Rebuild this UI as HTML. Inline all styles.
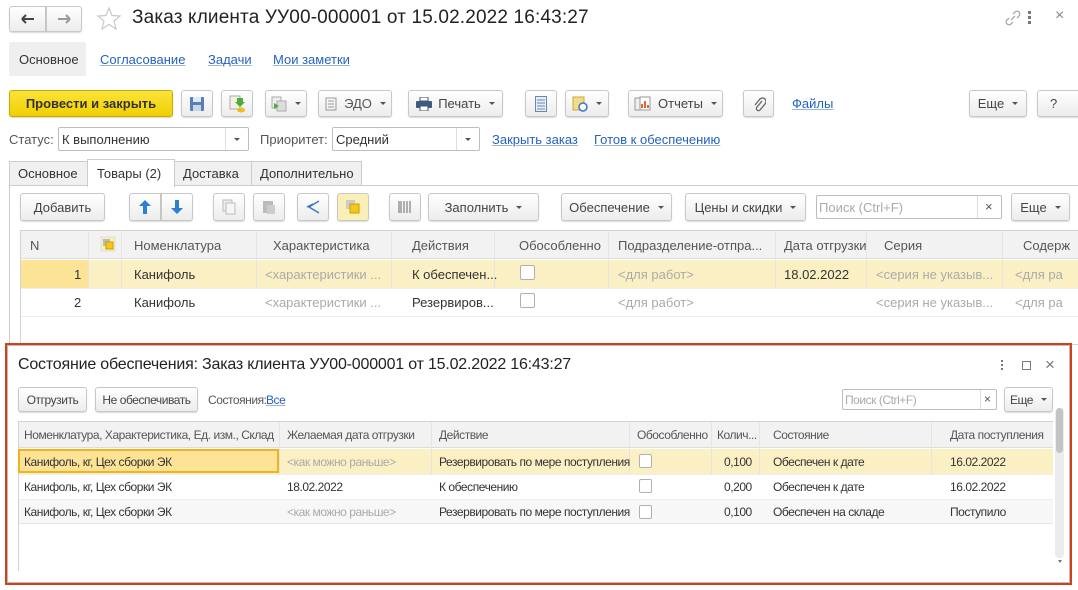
<!DOCTYPE html>
<html><head><meta charset="utf-8"><style>
*{box-sizing:border-box;margin:0;padding:0}
body{width:1078px;height:590px;background:#fff;font-family:"Liberation Sans",Arial,sans-serif;font-size:13px;color:#333;position:relative;overflow:hidden}
.a{position:absolute}
.btn{position:absolute;border:1px solid #c8c8c8;border-radius:3px;background:linear-gradient(#fff,#ececec);box-shadow:0 1px 1px rgba(0,0,0,.15);display:flex;align-items:center;justify-content:center;color:#444;white-space:nowrap}
.dd:after{content:"";display:inline-block;margin-left:8px;border-left:3px solid transparent;border-right:3px solid transparent;border-top:3px solid #555}
.lnk{position:absolute;color:#2462c0;text-decoration:underline;text-decoration-color:#9ab4df;white-space:nowrap}
.t{position:absolute;white-space:nowrap}
.inp{position:absolute;border:1px solid #bdbdbd;border-radius:2px;background:#fff}
.cb{position:absolute;width:15px;height:15px;border:1px solid #b0b0b0;border-radius:2px;background:#fff}
.grey{color:#aaa}
.sm{font-size:12px;letter-spacing:-0.45px}
</style></head><body>

<div class="btn" style="left:9px;top:6px;width:37px;height:26px;border-radius:3px 0 0 3px"><svg width="14" height="10"><path d="M1 5H13M1 5L5 1M1 5L5 9" stroke="#444" stroke-width="2" fill="none"/></svg></div>
<div class="btn" style="left:46px;top:6px;width:36px;height:26px;border-radius:0 3px 3px 0"><svg width="14" height="10"><path d="M1 5H13M13 5L9 1M13 5L9 9" stroke="#999" stroke-width="2" fill="none"/></svg></div>
<svg class="a" style="left:96px;top:6px" width="26" height="24"><path d="M13 2L16 9.5L24 10L18 15L20 23L13 18.5L6 23L8 15L2 10L10 9.5Z" fill="none" stroke="#c8c8c8" stroke-width="1.2"/></svg>
<div class="t" style="left:132px;top:7px;font-size:19px;color:#222;letter-spacing:0.15px">Заказ клиента УУ00-000001 от 15.02.2022 16:43:27</div>
<svg class="a" style="left:1004px;top:9px" width="18" height="18"><path d="M7 11L11 7M5 9L3 11a2.5 2.5 0 0 0 4 4L9 13M13 9L15 7a2.5 2.5 0 0 0 -4 -4L9 5" stroke="#aaa" stroke-width="1.3" fill="none"/></svg>
<div class="a" style="left:1028px;top:11px;width:3px;height:3px;background:#777;box-shadow:0 5px #777,0 10px #777"></div>
<div class="t" style="left:1055px;top:7px;color:#888;font-size:16px">×</div>

<div class="a" style="left:9px;top:42px;width:77px;height:34px;background:#efefef;border-radius:2px"></div>
<div class="t" style="left:19px;top:52px;color:#333">Основное</div>
<div class="lnk" style="left:100px;top:52px">Согласование</div>
<div class="lnk" style="left:208px;top:52px">Задачи</div>
<div class="lnk" style="left:273px;top:52px">Мои заметки</div>

<div class="btn" style="left:9px;top:90px;width:164px;height:27px;background:linear-gradient(#fbe33a,#f1d000);border-color:#c8a900;color:#333;font-weight:bold">Провести и закрыть</div>
<div class="btn" style="left:181px;top:90px;width:32px;height:27px"><svg width="16" height="16"><rect x="1" y="1" width="14" height="14" rx="1" fill="#5a7fb4"/><rect x="4" y="1" width="8" height="5" fill="#dfe8f3"/><rect x="4" y="9" width="8" height="6" fill="#c9d6e8"/></svg></div>
<div class="btn" style="left:221px;top:90px;width:32px;height:27px"><svg width="18" height="18"><rect x="2" y="1" width="10" height="13" fill="#f3f1e4" stroke="#aaa"/><path d="M9 3h6v4h2l-5 5-5-5h2z" fill="#4cae3a"/><ellipse cx="13" cy="15" rx="4" ry="2.5" fill="#e8c020"/></svg></div>
<div class="btn dd" style="left:265px;top:90px;width:42px;height:27px"><svg width="16" height="16"><rect x="1" y="1" width="9" height="11" fill="#eee" stroke="#aaa"/><rect x="6" y="5" width="9" height="10" fill="#ddd" stroke="#aaa"/><path d="M3 7l5 3-5 3z" fill="#4cae3a"/></svg></div>
<div class="btn dd" style="left:318px;top:90px;width:74px;height:27px;color:#555"><svg width="14" height="14" style="margin-right:6px"><rect x="2" y="1" width="10" height="12" fill="none" stroke="#999"/><path d="M4 4h6M4 7h6M4 10h6" stroke="#999"/></svg>ЭДО</div>
<div class="btn dd" style="left:408px;top:90px;width:95px;height:27px"><svg width="16" height="14" style="margin-right:6px"><rect x="4" y="0" width="8" height="4" fill="#fff" stroke="#456"/><rect x="0" y="4" width="16" height="7" rx="1" fill="#3d5a80"/><rect x="4" y="9" width="8" height="5" fill="#fff" stroke="#456"/></svg>Печать</div>
<div class="btn" style="left:525px;top:90px;width:32px;height:27px"><svg width="12" height="16"><rect x="0.5" y="0.5" width="11" height="15" fill="#e8eef6" stroke="#6b87b0"/><path d="M2 4h8M2 7h8M2 10h8M2 13h8" stroke="#6b87b0"/></svg></div>
<div class="btn dd" style="left:565px;top:90px;width:44px;height:27px"><svg width="16" height="16"><rect x="1" y="1" width="11" height="13" fill="#f2dc8a" stroke="#c9a83c"/><circle cx="11" cy="11" r="4" fill="#fff" stroke="#3a78c8" stroke-width="1.5"/></svg></div>
<div class="btn dd" style="left:628px;top:90px;width:95px;height:27px"><svg width="18" height="16" style="margin-right:6px"><rect x="1" y="2" width="10" height="12" fill="#eee" stroke="#999"/><rect x="6" y="1" width="10" height="13" fill="#fff" stroke="#999"/><path d="M8 12V8M11 12V5M14 12V9" stroke="#e06a2c" stroke-width="2"/></svg>Отчеты</div>
<div class="btn" style="left:743px;top:90px;width:31px;height:27px"><svg width="14" height="16"><path d="M10 5L5 11a2 2 0 0 0 3 3L13 8a3.5 3.5 0 0 0 -5 -5L3 9" stroke="#666" stroke-width="1.3" fill="none"/></svg></div>
<div class="lnk" style="left:792px;top:96px">Файлы</div>
<div class="btn dd" style="left:969px;top:90px;width:58px;height:27px">Еще</div>
<div class="btn" style="left:1037px;top:90px;width:45px;height:27px;justify-content:flex-start;padding-left:12px">?</div>

<div class="t" style="left:9px;top:132px;color:#555">Статус:</div>
<div class="inp" style="left:58px;top:127px;width:191px;height:24px"></div>
<div class="a" style="left:225px;top:128px;width:1px;height:22px;background:#ddd"></div>
<div class="t" style="left:62px;top:132px;color:#333">К выполнению</div>
<div class="a" style="left:234px;top:138px;border-left:3px solid transparent;border-right:3px solid transparent;border-top:3px solid #555"></div>
<div class="t" style="left:260px;top:132px;color:#555">Приоритет:</div>
<div class="inp" style="left:332px;top:127px;width:148px;height:24px"></div>
<div class="a" style="left:456px;top:128px;width:1px;height:22px;background:#ddd"></div>
<div class="t" style="left:336px;top:132px;color:#333">Средний</div>
<div class="a" style="left:465px;top:138px;border-left:3px solid transparent;border-right:3px solid transparent;border-top:3px solid #555"></div>
<div class="lnk" style="left:492px;top:132px">Закрыть заказ</div>
<div class="lnk" style="left:594px;top:132px">Готов к обеспечению</div>

<div class="a" style="left:9px;top:185px;width:1069px;height:1px;background:#ccc"></div>
<div class="a" style="left:9px;top:185px;width:1px;height:160px;background:#ccc"></div>
<div class="a" style="left:9px;top:161px;width:79px;height:25px;background:#f0f0f0;border:1px solid #ccc"></div>
<div class="t" style="left:18px;top:166px">Основное</div>
<div class="a" style="left:87px;top:159px;width:88px;height:28px;background:#fff;border:1px solid #ccc;border-bottom:none"></div>
<div class="t" style="left:97px;top:166px">Товары (2)</div>
<div class="a" style="left:174px;top:161px;width:78px;height:25px;background:#f0f0f0;border:1px solid #ccc"></div>
<div class="t" style="left:183px;top:166px">Доставка</div>
<div class="a" style="left:251px;top:161px;width:111px;height:25px;background:#f0f0f0;border:1px solid #ccc"></div>
<div class="t" style="left:260px;top:166px">Дополнительно</div>

<div class="btn" style="left:20px;top:193px;width:85px;height:28px">Добавить</div>
<div class="btn" style="left:129px;top:193px;width:32px;height:28px;border-radius:3px 0 0 3px"><svg width="12" height="14"><path d="M6 0L12 6H8V14H4V6H0Z" fill="#2d7fd1"/></svg></div>
<div class="btn" style="left:161px;top:193px;width:32px;height:28px;border-radius:0 3px 3px 0"><svg width="12" height="14"><path d="M6 14L12 8H8V0H4V8H0Z" fill="#2d7fd1"/></svg></div>
<div class="btn" style="left:213px;top:193px;width:32px;height:28px"><svg width="14" height="16"><rect x="1" y="1" width="9" height="11" fill="#eee" stroke="#bbb"/><rect x="4" y="4" width="9" height="11" fill="#f6f6f6" stroke="#bbb"/></svg></div>
<div class="btn" style="left:253px;top:193px;width:32px;height:28px"><svg width="14" height="16"><rect x="1" y="2" width="10" height="12" fill="#bbb"/><rect x="5" y="6" width="8" height="9" fill="#ccc"/></svg></div>
<div class="btn" style="left:297px;top:193px;width:32px;height:28px"><svg width="16" height="16"><path d="M14 2L4 8L14 14M8 5L2 8" stroke="#3a78c8" stroke-width="1.5" fill="none"/></svg></div>
<div class="btn" style="left:337px;top:193px;width:32px;height:28px;background:#fbefb8"><svg width="14" height="14"><rect x="0" y="0" width="9" height="9" fill="#ccc"/><rect x="4" y="4" width="9" height="9" fill="#f4c71e" stroke="#c9a000"/></svg></div>
<div class="btn" style="left:389px;top:193px;width:32px;height:28px"><svg width="14" height="14"><path d="M1 1v12M3 1v12M6 1v12M9 1v12M12 1v12" stroke="#666"/></svg></div>
<div class="btn dd" style="left:428px;top:193px;width:111px;height:28px">Заполнить</div>
<div class="btn dd" style="left:561px;top:193px;width:111px;height:28px">Обеспечение</div>
<div class="btn dd" style="left:685px;top:193px;width:121px;height:28px">Цены и скидки</div>
<div class="inp" style="left:816px;top:195px;width:186px;height:24px"></div>
<div class="a" style="left:977px;top:196px;width:1px;height:22px;background:#ddd"></div>
<div class="t grey" style="left:819px;top:200px">Поиск (Ctrl+F)</div>
<div class="t" style="left:985px;top:199px;color:#555">×</div>
<div class="btn dd" style="left:1011px;top:193px;width:59px;height:28px">Еще</div>

<div class="a" style="left:20px;top:230px;width:1058px;height:115px;border:1px solid #d3d3d3;border-right:none"></div>
<div class="a" style="left:21px;top:231px;width:1057px;height:28px;background:#f2f2f2;border-bottom:1px solid #ddd"></div>
<div class="a" style="left:21px;top:260px;width:1057px;height:28px;background:#fbf0c4"></div>
<div class="a" style="left:21px;top:260px;width:67px;height:28px;background:#fce396"></div>
<div class="a" style="left:21px;top:288px;width:1057px;height:1px;background:#eee"></div>
<div class="a" style="left:21px;top:316px;width:1057px;height:1px;background:#eee"></div>
<div class="t" style="left:30px;top:238px;color:#555">N</div>
<svg class="a" style="left:100px;top:236px" width="16" height="16"><rect x="1" y="1" width="14" height="14" fill="#fbefb8" stroke="#ddd"/><rect x="3" y="3" width="7" height="7" fill="#bbb"/><rect x="6" y="6" width="7" height="7" fill="#f4c71e" stroke="#c9a000"/></svg>
<div class="t" style="left:134px;top:238px;color:#555">Номенклатура</div>
<div class="t" style="left:273px;top:238px;color:#555">Характеристика</div>
<div class="t" style="left:412px;top:238px;color:#555">Действия</div>
<div class="t" style="left:519px;top:238px;color:#555">Обособленно</div>
<div class="t" style="left:618px;top:238px;color:#555">Подразделение-отпра...</div>
<div class="t" style="left:784px;top:238px;color:#555">Дата отгрузки</div>
<div class="t" style="left:884px;top:238px;color:#555">Серия</div>
<div class="t" style="left:1023px;top:238px;color:#555">Содерж</div>
<div class="a" style="left:88px;top:231px;width:1px;height:57px;background:#e4e4e4"></div>
<div class="a" style="left:121px;top:231px;width:1px;height:57px;background:#e4e4e4"></div>
<div class="a" style="left:256px;top:231px;width:1px;height:57px;background:#e4e4e4"></div>
<div class="a" style="left:391px;top:231px;width:1px;height:57px;background:#e4e4e4"></div>
<div class="a" style="left:494px;top:231px;width:1px;height:57px;background:#e4e4e4"></div>
<div class="a" style="left:608px;top:231px;width:1px;height:57px;background:#e4e4e4"></div>
<div class="a" style="left:775px;top:231px;width:1px;height:57px;background:#e4e4e4"></div>
<div class="a" style="left:866px;top:231px;width:1px;height:57px;background:#e4e4e4"></div>
<div class="a" style="left:1002px;top:231px;width:1px;height:57px;background:#e4e4e4"></div>
<div class="t" style="left:74px;top:267px">1</div>
<div class="t" style="left:134px;top:267px">Канифоль</div>
<div class="t grey" style="left:265px;top:267px">&lt;характеристики ...</div>
<div class="t" style="left:412px;top:267px">К обеспечен...</div>
<div class="cb" style="left:520px;top:265px"></div>
<div class="t grey" style="left:618px;top:267px">&lt;для работ&gt;</div>
<div class="t" style="left:784px;top:267px">18.02.2022</div>
<div class="t grey" style="left:876px;top:267px">&lt;серия не указыв...</div>
<div class="t grey" style="left:1015px;top:267px">&lt;для ра</div>
<div class="t" style="left:74px;top:295px">2</div>
<div class="t" style="left:134px;top:295px">Канифоль</div>
<div class="t grey" style="left:265px;top:295px">&lt;характеристики ...</div>
<div class="t" style="left:412px;top:295px">Резервиров...</div>
<div class="cb" style="left:520px;top:293px"></div>
<div class="t grey" style="left:618px;top:295px">&lt;для работ&gt;</div>
<div class="t grey" style="left:876px;top:295px">&lt;серия не указыв...</div>
<div class="t grey" style="left:1015px;top:295px">&lt;для ра</div>

<div class="a" style="left:5px;top:343px;width:1067px;height:242px;border:2px solid #d2401a;background:#fff"></div>
<div class="a" style="left:7px;top:345px;width:1063px;height:238px;border:1px solid #bbb"></div>
<div class="t" style="left:18px;top:356px;font-size:16px;color:#222;letter-spacing:-0.2px">Состояние обеспечения: Заказ клиента УУ00-000001 от 15.02.2022 16:43:27</div>
<div class="a" style="left:1001px;top:360px;width:2px;height:2px;background:#777;box-shadow:0 4px #777,0 8px #777"></div>
<div class="a" style="left:1022px;top:361px;width:9px;height:9px;border:1px solid #777"></div>
<div class="t" style="left:1045px;top:355px;font-size:17px;color:#777">×</div>

<div class="btn sm" style="left:18px;top:387px;width:69px;height:25px">Отгрузить</div>
<div class="btn sm" style="left:95px;top:387px;width:103px;height:25px">Не обеспечивать</div>
<div class="t sm" style="left:208px;top:393px;color:#555">Состояния:</div>
<div class="lnk sm" style="left:266px;top:393px">Все</div>
<div class="inp" style="left:842px;top:389px;width:155px;height:21px"></div>
<div class="a" style="left:980px;top:390px;width:1px;height:19px;background:#ddd"></div>
<div class="t sm grey" style="left:845px;top:393px">Поиск (Ctrl+F)</div>
<div class="t sm" style="left:984px;top:392px;color:#555">×</div>
<div class="btn dd sm" style="left:1004px;top:387px;width:49px;height:25px">Еще</div>

<div class="a" style="left:18px;top:421px;width:1035px;height:150px;border:1px solid #d3d3d3;border-right:none;border-bottom:none"></div>
<div class="a" style="left:19px;top:422px;width:1034px;height:26px;background:#f2f2f2;border-bottom:1px solid #ddd"></div>
<div class="a" style="left:19px;top:449px;width:1034px;height:25px;background:#fbf0c4"></div>
<div class="a" style="left:18px;top:449px;width:261px;height:24px;background:#fce396;border:2px solid #f0b21e"></div>
<div class="a" style="left:19px;top:474px;width:1034px;height:1px;background:#eee"></div>
<div class="a" style="left:19px;top:499px;width:1034px;height:25px;background:#f7f7f7;border-top:1px solid #eee;border-bottom:1px solid #e6e6e6"></div>
<div class="a" style="left:279px;top:422px;width:1px;height:52px;background:#e4e4e4"></div>
<div class="a" style="left:431px;top:422px;width:1px;height:52px;background:#e4e4e4"></div>
<div class="a" style="left:629px;top:422px;width:1px;height:52px;background:#e4e4e4"></div>
<div class="a" style="left:711px;top:422px;width:1px;height:52px;background:#e4e4e4"></div>
<div class="a" style="left:759px;top:422px;width:1px;height:52px;background:#e4e4e4"></div>
<div class="a" style="left:931px;top:422px;width:1px;height:52px;background:#e4e4e4"></div>

<div class="t sm" style="left:24px;top:428px;color:#555;width:250px;overflow:hidden">Номенклатура, Характеристика, Ед. изм., Склад / ...</div>
<div class="t sm" style="left:287px;top:428px;color:#555">Желаемая дата отгрузки</div>
<div class="t sm" style="left:439px;top:428px;color:#555">Действие</div>
<div class="t sm" style="left:637px;top:428px;color:#555">Обособленно</div>
<div class="t sm" style="left:717px;top:428px;color:#555">Колич...</div>
<div class="t sm" style="left:773px;top:428px;color:#555">Состояние</div>
<div class="t sm" style="left:950px;top:428px;color:#555">Дата поступления</div>

<div class="t sm" style="left:24px;top:455px">Канифоль, кг, Цех сборки ЭК</div>
<div class="t sm grey" style="left:287px;top:455px">&lt;как можно раньше&gt;</div>
<div class="t sm" style="left:439px;top:455px">Резервировать по мере поступления</div>
<div class="cb" style="left:639px;top:454px;width:13px;height:14px"></div>
<div class="t sm" style="left:724px;top:455px">0,100</div>
<div class="t sm" style="left:773px;top:455px">Обеспечен к дате</div>
<div class="t sm" style="left:950px;top:455px">16.02.2022</div>

<div class="t sm" style="left:24px;top:480px">Канифоль, кг, Цех сборки ЭК</div>
<div class="t sm" style="left:287px;top:480px">18.02.2022</div>
<div class="t sm" style="left:439px;top:480px">К обеспечению</div>
<div class="cb" style="left:639px;top:479px;width:13px;height:14px"></div>
<div class="t sm" style="left:724px;top:480px">0,200</div>
<div class="t sm" style="left:773px;top:480px">Обеспечен к дате</div>
<div class="t sm" style="left:950px;top:480px">16.02.2022</div>

<div class="t sm" style="left:24px;top:505px">Канифоль, кг, Цех сборки ЭК</div>
<div class="t sm grey" style="left:287px;top:505px">&lt;как можно раньше&gt;</div>
<div class="t sm" style="left:439px;top:505px">Резервировать по мере поступления</div>
<div class="cb" style="left:639px;top:505px;width:13px;height:14px"></div>
<div class="t sm" style="left:724px;top:505px">0,100</div>
<div class="t sm" style="left:773px;top:505px">Обеспечен на складе</div>
<div class="t sm" style="left:950px;top:505px">Поступило</div>

<div class="a" style="left:1055px;top:408px;width:9px;height:150px;background:#ececec;border-radius:4px"></div>
<div class="a" style="left:1056px;top:408px;width:7px;height:45px;background:#c4c4c4;border-radius:4px"></div>
<div class="a" style="left:1058px;top:560px;border-left:2px solid transparent;border-right:2px solid transparent;border-top:3px solid #777"></div>
</body></html>
